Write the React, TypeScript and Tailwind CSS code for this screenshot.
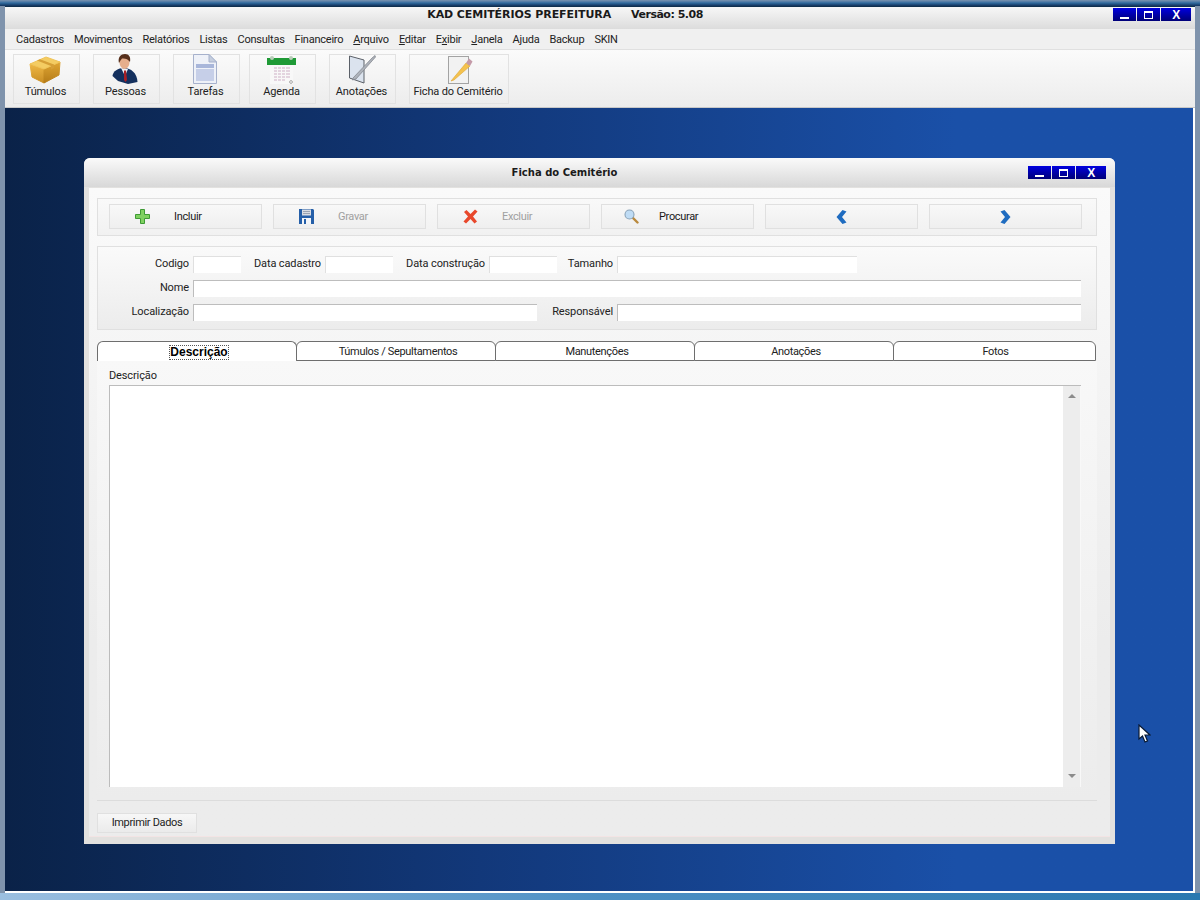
import type { ReactNode } from "react";

const font = "font-['Roboto',Arial,sans-serif]";

const menus: [string, string, string][] = [
  ["Cadastros", "", ""],
  ["Movimentos", "", ""],
  ["Relatórios", "", ""],
  ["Listas", "", ""],
  ["Consultas", "", ""],
  ["Financeiro", "", ""],
  ["", "A", "rquivo"],
  ["", "E", "ditar"],
  ["E", "x", "ibir"],
  ["", "J", "anela"],
  ["A", "j", "uda"],
  ["Backup", "", ""],
  ["SKIN", "", ""],
];

function BoxIcon() {
  return (
    <svg className="mr-[3px]" width="32" height="28" viewBox="0 0 32 28">
      <defs>
        <linearGradient id="boxLeft" x1="0" y1="0" x2="0" y2="1">
          <stop offset="0" stopColor="#eeb745" />
          <stop offset="1" stopColor="#c98e24" />
        </linearGradient>
        <linearGradient id="boxRight" x1="0" y1="0" x2="0" y2="1">
          <stop offset="0" stopColor="#dfa533" />
          <stop offset="1" stopColor="#b57c18" />
        </linearGradient>
      </defs>
      <path d="M1 8 L15 13 L15 27 L3 21 Z" fill="url(#boxLeft)" stroke="url(#boxLeft)" strokeLinejoin="round" />
      <path d="M15 13 L31 6 L30 19 L15 27 Z" fill="url(#boxRight)" stroke="url(#boxRight)" strokeLinejoin="round" />
      <path d="M1 8 L17 1 L31 6 L15 13 Z" fill="#f4cc62" stroke="#f0c458" strokeLinejoin="round" />
      <path d="M8 4.5 L11 3.2 L25 8.5 L25 12 L22 13.5 L22 10 Z" fill="#d69f36" />
    </svg>
  );
}

function PersonIcon() {
  return (
    <svg className="mr-[4px]" width="26" height="30" viewBox="0 0 26 30">
      <path d="M0.5 22 C1 17 6 14 12 14 C19 14 25 19 25.5 28 L16 30 L6 27 Z" fill="#14305e" />
      <path d="M9 14 L13 22 L16 15 Z" fill="#eef0f4" />
      <path d="M12 16.5 L14 16.5 L15 26 L13.5 28 L12 26 Z" fill="#a81f25" />
      <ellipse cx="12.5" cy="8.5" rx="5" ry="6.5" fill="#e6ae8c" />
      <path d="M7 9 C5.5 3 9 0 13 0 C17 0 19 3 18 8 C16 5 13 4 10 4.5 C9 5.5 8 7 7 9 Z" fill="#57301c" />
    </svg>
  );
}

function SheetIcon() {
  return (
    <svg className="mr-[3px]" width="24" height="30" viewBox="0 0 24 30">
      <path d="M0.5 0.5 H16 L23.5 8 V29.5 H0.5 Z" fill="#eef1f8" stroke="#a6b1cc" />
      <path d="M16 0.5 L23.5 8 H16 Z" fill="#c5cede" stroke="#a6b1cc" />
      <rect x="3" y="10" width="18" height="4" fill="#a8b6da" />
      <rect x="3" y="15" width="18" height="12" fill="#c6cfe8" />
    </svg>
  );
}

function CalendarIcon() {
  return (
    <svg className="mr-[2px]" width="29" height="28" viewBox="0 0 29 28">
      <rect x="3" y="8" width="23" height="20" fill="#f8f8f8" />
      <rect x="0" y="2" width="29" height="7" fill="#1f9a36" />
      <circle cx="5" cy="2" r="2" fill="#b9cdb9" />
      <circle cx="24" cy="2" r="2" fill="#b9cdb9" />
      <path d="M7 12 H23 M7 15 H23 M7 18 H23 M7 21 H23 M7 24 H19" stroke="#dcc8d6" strokeWidth="1.6" />
      <path d="M10.5 11 V25 M14.5 11 V25 M18.5 11 V25" stroke="#f8f8f8" />
      <circle cx="24" cy="26" r="1.4" fill="none" stroke="#a8a8a8" />
    </svg>
  );
}

function NoteIcon() {
  return (
    <svg className="mr-[1px]" width="28" height="29" viewBox="0 0 28 29">
      <path d="M1.5 1 L16 5 L16 28 L1.5 23 Z" fill="#dbe3ee" stroke="#5b6068" />
      <path d="M5 23 L24 3 L27 0.5 L27.5 2 L8 24 L4.5 25 Z" fill="#aeb3bb" stroke="#7b7f87" strokeWidth="0.7" />
    </svg>
  );
}

function PencilIcon() {
  return (
    <svg className="ml-[3px]" width="25" height="28" viewBox="0 0 25 28">
      <rect x="0.5" y="0.5" width="20" height="27" fill="#f2f2f2" stroke="#a3a3a3" />
      <path d="M3 25 L18 7 L22 10 L6 24 Z" fill="#f4c24e" stroke="#dea52f" strokeWidth="0.6" />
      <path d="M18 7 L21 2.5 L24.5 5.5 L22 10 Z" fill="#c49aa8" />
    </svg>
  );
}

function PlusIcon() {
  return (
    <svg width="15" height="15" viewBox="0 0 15 15">
      <path
        d="M5.5 .5 H9.5 V5.5 H14.5 V9.5 H9.5 V14.5 H5.5 V9.5 H.5 V5.5 H5.5 Z"
        fill="#7fd160"
        stroke="#3f9a35"
        strokeLinejoin="round"
      />
    </svg>
  );
}

function FloppyIcon() {
  return (
    <svg width="15" height="15" viewBox="0 0 15 15">
      <path d="M0 0 H14 L15 1 V15 H0 Z" fill="#255fa8" />
      <rect x="3" y="0.5" width="9" height="6" fill="#d9dce2" />
      <path d="M4 2.5 H11 M4 4.5 H11" stroke="#9aa4b3" />
      <rect x="3" y="9" width="9" height="6" fill="#f4f6f9" />
      <rect x="5" y="10" width="2" height="5" fill="#255fa8" />
    </svg>
  );
}

function CrossIcon() {
  return (
    <svg width="15" height="15" viewBox="0 0 15 15">
      <path
        d="M1 3 L3.5 1 L7.5 5 L12 .5 L14.5 2.5 L10 7.5 L14 12.5 L11.5 14.5 L7.5 10 L3 14.5 L.5 12.5 L5 7.5 Z"
        fill="#e8482c"
      />
    </svg>
  );
}

function SearchIcon() {
  return (
    <svg width="15" height="15" viewBox="0 0 15 15">
      <path d="M8.5 8.5 L13.5 13.5" stroke="#b9893c" strokeWidth="2.4" strokeLinecap="round" />
      <circle cx="5.5" cy="5.5" r="4.5" fill="#bfdcf5" stroke="#8aa3b8" strokeWidth="1.1" />
    </svg>
  );
}

function Chevron({ right }: { right?: boolean }) {
  return (
    <svg width="11" height="14" viewBox="0 0 11 14">
      <path
        d={right ? "M0.5 1.5 L4.5 0 L10.5 7 L4.5 14 L0.5 12.5 L5 7 Z" : "M10.5 1.5 L6.5 0 L0.5 7 L6.5 14 L10.5 12.5 L6 7 Z"}
        fill="#1f6cc0"
      />
    </svg>
  );
}

function WindowButtons() {
  return (
    <div className="flex gap-[1px]">
      <div className="w-[23px] h-[13px] bg-gradient-to-b from-[#0000e0] to-[#000078] flex items-end justify-center pb-[2px]">
        <div className="w-[9px] h-[2px] bg-white" />
      </div>
      <div className="w-[23px] h-[13px] bg-gradient-to-b from-[#0000e0] to-[#000078] flex items-center justify-center">
        <div className="w-[9px] h-[8px] border border-white border-t-2" />
      </div>
      <div className="w-[30px] h-[13px] bg-gradient-to-b from-[#0000e0] to-[#000078] flex items-center justify-center text-white text-[12px] font-bold leading-none font-['Liberation_Sans',sans-serif]">
        X
      </div>
    </div>
  );
}

function ToolButton({ className, icon, label }: { className: string; icon: ReactNode; label: string }) {
  return (
    <div className={`${className} h-[50px] border border-[#e2e2e2] flex flex-col items-center`}>
      <div className="h-[29px] flex items-end">{icon}</div>
      <div className="mt-[1px] pr-[2px] text-[11px] leading-[14px] tracking-[-0.15px] text-[#222] whitespace-nowrap">
        {label}
      </div>
    </div>
  );
}

function ActionButton({
  icon,
  label,
  disabled,
  iconBox = "ml-[25px] w-[39px]",
}: {
  icon?: ReactNode;
  label?: string;
  disabled?: boolean;
  iconBox?: string;
}) {
  return (
    <div className="w-[153px] h-[25px] border border-[#e0e0e0] bg-gradient-to-b from-[#f8f8f8] to-[#efefef] flex items-center">
      {label ? (
        <>
          <div className={`${iconBox} flex`}>{icon}</div>
          <span className={`text-[11px] pt-[1px] ${disabled ? "text-[#a0a0a0]" : "text-[#1a1a1a]"}`}>{label}</span>
        </>
      ) : (
        <div className="w-full flex justify-center">{icon}</div>
      )}
    </div>
  );
}

function Field({ label, labelW, w, faint }: { label: string; labelW: string; w: string; faint?: boolean }) {
  return (
    <>
      <span
        className={`${labelW} text-right text-[11px] leading-[14px] tracking-[-0.12px] text-[#222] pr-[4px] mb-[2px] shrink-0`}
      >
        {label}
      </span>
      <div
        className={`${w} h-[17px] shrink-0 bg-white border-t border-l ${faint ? "border-[#e0e0e0]" : "border-[#bdbdbd]"}`}
      />
    </>
  );
}

function Tab({ label, active, className }: { label: string; active?: boolean; className: string }) {
  return (
    <div
      className={`${className} h-[20px] -mr-[1px] bg-white border-t border-x border-[#6e6e6e] rounded-t-[6px] flex items-center justify-center text-[11px] pt-[2px] ${
        active ? "" : "border-b"
      }`}
    >
      {active ? (
        <span className="font-['Liberation_Sans',sans-serif] font-bold tracking-normal text-[12px] leading-[13px] text-black outline-1 outline-dotted outline-[#555]">
          {label}
        </span>
      ) : (
        <span className="text-[#222]">{label}</span>
      )}
    </div>
  );
}

export default function App() {
  return (
    <div
      className={`${font} tracking-[-0.33px] w-[1200px] h-[900px] overflow-hidden relative bg-[#7f93ac] px-[5px] flex flex-col`}
    >
      {/* window frame, top */}
      <div className="h-[6px] -mx-[5px] shrink-0 bg-gradient-to-b from-[#7d94b0] via-[#2f6a9e] to-[#12315a]" />

      <div className="h-[23px] bg-gradient-to-b from-[#f7f7f7] to-[#dcdcdc] border-t border-[#10304f] relative flex items-center justify-center pb-[6px] pr-[70px] shrink-0">
        <span className="font-['DejaVu_Sans',sans-serif] font-bold text-[11px] text-[#1a1a1a] tracking-[-0.08px]">
          KAD CEMITÉRIOS PREFEITURA
        </span>
        <span className="ml-[20px] font-['DejaVu_Sans',sans-serif] font-bold text-[11px] text-[#1a1a1a] tracking-[-0.5px]">
          Versão: 5.08
        </span>
        <div className="absolute right-[4px] top-[1px]">
          <WindowButtons />
        </div>
      </div>

      <div className="h-[21px] bg-[#f0f0f0] border-b border-[#e0e0e0] flex items-center pl-[11px] pt-[3px] gap-[10px] text-[11px] tracking-[-0.24px] text-[#222] shrink-0">
        {menus.map(([a, u, b]) => (
          <span key={a + u + b}>
            {a}
            {u && <span className="underline">{u}</span>}
            {b}
          </span>
        ))}
      </div>

      <div className="h-[58px] bg-gradient-to-b from-[#fbfbfb] to-[#ececec] border-b border-[#c8c8c8] flex pt-[4px] pl-[8px] shrink-0">
        <ToolButton className="w-[67px] mr-[13px]" icon={<BoxIcon />} label="Túmulos" />
        <ToolButton className="w-[67px] mr-[13px]" icon={<PersonIcon />} label="Pessoas" />
        <ToolButton className="w-[67px] mr-[9px]" icon={<SheetIcon />} label="Tarefas" />
        <ToolButton className="w-[67px] mr-[13px]" icon={<CalendarIcon />} label="Agenda" />
        <ToolButton className="w-[67px] mr-[13px]" icon={<NoteIcon />} label="Anotações" />
        <ToolButton className="w-[100px]" icon={<PencilIcon />} label="Ficha do Cemitério" />
      </div>

      {/* desktop */}
      <div className="flex-1 bg-gradient-to-r from-[#0a2248] via-[#12387a] via-40% to-[#1a50a8] to-80% pt-[50px] pl-[79px] border-b-2 border-r-2 border-white">
        <div className="w-[1031px] h-[686px] bg-[#e2e1df] rounded-t-[6px] flex flex-col">
          <div className="h-[29px] shrink-0 rounded-t-[6px] bg-gradient-to-b from-[#fafafa] to-[#d8d8d8] relative flex items-center justify-center pr-[70px]">
            <span className="font-['DejaVu_Sans',sans-serif] font-bold tracking-normal text-[10px] text-[#1a1a1a]">
              Ficha do Cemitério
            </span>
            <div className="absolute right-[9px] top-[8px]">
              <WindowButtons />
            </div>
          </div>

          <div className="flex-1 mx-[5px] mb-[7px] mt-[1px] border-b border-[#f3e4e4] px-[8px] pt-[10px] bg-gradient-to-b from-[#fafafa] to-[#ececec] to-70%">
            <div className="w-[1000px] h-[38px] border border-[#e0e0e0] bg-gradient-to-b from-[#f9f9f9] to-[#f1f1f1] flex items-start pt-[5px] pl-[11px] gap-[11px]">
              <ActionButton icon={<PlusIcon />} label="Incluir" />
              <ActionButton icon={<FloppyIcon />} label="Gravar" disabled />
              <ActionButton icon={<CrossIcon />} label="Excluir" disabled />
              <ActionButton icon={<SearchIcon />} label="Procurar" iconBox="ml-[22px] w-[35px]" />
              <ActionButton icon={<Chevron />} />
              <ActionButton icon={<Chevron right />} />
            </div>

            <div className="w-[1000px] h-[84px] mt-[10px] border border-[#e0e0e0] bg-gradient-to-b from-[#fafafa] to-[#ececec] pt-[9px] flex flex-col gap-[7px]">
              <div className="flex items-center">
                <Field label="Codigo" labelW="w-[95px]" w="w-[48px]" faint />
                <Field label="Data cadastro" labelW="w-[84px]" w="w-[68px]" faint />
                <Field label="Data construção" labelW="w-[96px]" w="w-[68px]" faint />
                <Field label="Tamanho" labelW="w-[60px]" w="w-[240px]" faint />
              </div>
              <div className="flex items-center">
                <Field label="Nome" labelW="w-[95px]" w="w-[888px]" />
              </div>
              <div className="flex items-center">
                <Field label="Localização" labelW="w-[95px]" w="w-[344px]" />
                <Field label="Responsável" labelW="w-[80px]" w="w-[464px]" />
              </div>
            </div>

            <div className="mt-[11px] flex">
              <Tab label="Descrição" active className="w-[200px] pl-[4px]" />
              <Tab label="Túmulos / Sepultamentos" className="w-[200px] pl-[4px]" />
              <Tab label="Manutenções" className="w-[200px] pl-[4px]" />
              <Tab label="Anotações" className="w-[200px] pl-[4px]" />
              <Tab label="Fotos" className="w-[203px] pl-[2px]" />
            </div>

            <div className="w-[1000px] h-[440px] bg-gradient-to-b from-[#f8f8f8] to-[#ececec] px-[12px] border-b border-[#dcdcdc]">
              <div className="text-[11px] leading-[14px] tracking-[-0.12px] pt-[8px] text-[#222]">Descrição</div>
              <div className="w-[972px] h-[402px] mt-[2px] bg-white border-t border-l border-[#bcbcbc] border-b-white flex justify-end">
                <div className="w-[18px] h-full bg-[#ededed] border-r border-[#f8f8f8] flex flex-col justify-between items-center pt-[8px] pb-[9px]">
                  <div className="w-0 h-0 border-x-[4px] border-x-transparent border-b-[4px] border-b-[#8c8c8c]" />
                  <div className="w-0 h-0 border-x-[4px] border-x-transparent border-t-[4px] border-t-[#8c8c8c]" />
                </div>
              </div>
            </div>

            <div className="w-[100px] h-[20px] mt-[12px] bg-gradient-to-b from-[#f7f7f7] to-[#ebebeb] border border-[#e0e0e0] flex items-center justify-center text-[11px] text-[#222]">
              Imprimir Dados
            </div>
          </div>
        </div>
      </div>

      {/* window frame, bottom */}
      <div className="h-[7px] -mx-[5px] shrink-0 bg-gradient-to-r from-[#9bbfe0] via-[#4d90c4] to-[#2a78b0]" />

      {/* mouse pointer */}
      <svg className="absolute left-[1138px] top-[724px]" width="13" height="20" viewBox="0 0 13 20">
        <path d="M1 1 L1 15 L4.5 12 L7 18 L9.5 17 L7 11 L12 11 Z" fill="#fff" stroke="#0a1a33" strokeWidth="1.2" />
      </svg>
    </div>
  );
}
